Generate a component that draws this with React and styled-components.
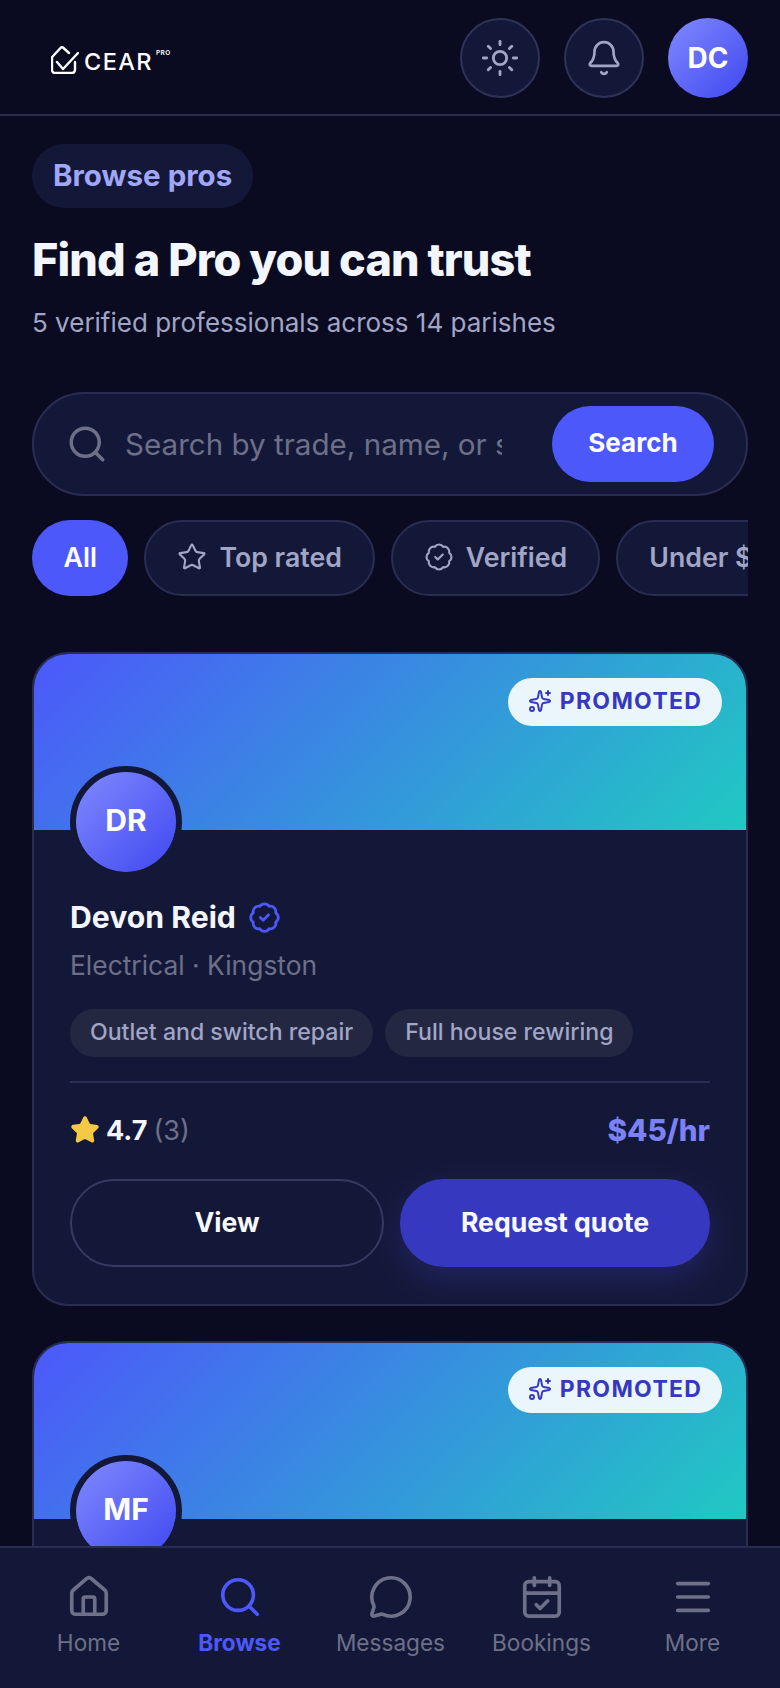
import React from "react";
import styled, { createGlobalStyle } from "styled-components";
import { Sun, Bell, Search, Star, BadgeCheck, Sparkles, House, MessageCircle, CalendarCheck, Menu } from "lucide-react";

const GlobalStyle = createGlobalStyle`
  html, body { margin: 0; padding: 0; background: #0a0b20; }
  * { box-sizing: border-box; }
  body { font-family: Inter, "Noto Sans", sans-serif; }
`;

const Page = styled.div`
  position: relative;
  width: 780px;
  height: 1688px;
  overflow: hidden;
  background: #0a0b20;
  color: #f4f6ff;
`;

const Header = styled.header`
  display: flex;
  align-items: center;
  justify-content: space-between;
  height: 116px;
  padding: 2px 32px 0 51px;
  border-bottom: 2px solid #2a2d52;
`;

const Logo = styled.div`
  display: flex;
  align-items: center;
  gap: 3px;
  padding-top: 3px;
  color: #fff;
`;

const LogoText = styled.span`
  margin: 3px 0 0 2px;
  font-size: 23.5px;
  font-weight: 500;
  letter-spacing: 1.4px;
`;

const LogoPro = styled.span`
  font-size: 6.5px;
  font-weight: 600;
  letter-spacing: 0.5px;
  align-self: flex-start;
  margin-top: 6px;
  line-height: 1;
`;

const HeaderActions = styled.div`
  display: flex;
  gap: 24px;
`;

const RoundButton = styled.button`
  width: 80px;
  height: 80px;
  border-radius: 50%;
  border: 2px solid #2f3358;
  background: #141838;
  color: #a1a5c6;
  display: flex;
  align-items: center;
  justify-content: center;
  padding: 0;
`;

const Avatar = styled.div`
  border-radius: 50%;
  background: linear-gradient(135deg, #8189ff, #3f48f0);
  color: #fff;
  display: flex;
  align-items: center;
  justify-content: center;
  font-weight: 700;
  width: ${(p) => p.$size}px;
  height: ${(p) => p.$size}px;
  font-size: ${(p) => p.$font}px;
`;

const CardAvatar = styled(Avatar)`
  border: 6px solid #141838;
  background-clip: padding-box;
  margin: -64px 0 0 0;
  padding-bottom: 4px;
  position: relative;
`;

const Main = styled.main`
  padding: 28px 32px 0;
`;

const Eyebrow = styled.div`
  display: inline-flex;
  align-items: center;
  height: 64px;
  padding: 0 21px 2px;
  border-radius: 32px;
  background: #141838;
  color: #a0a6f8;
  font-size: 29.5px;
  font-weight: 700;
`;

const Title = styled.h1`
  margin: 24px 0 0;
  font-size: 45px;
  line-height: 56px;
  font-weight: 800;
  letter-spacing: -0.9px;
`;

const Subtitle = styled.p`
  margin: 18px 0 0;
  font-size: 26px;
  line-height: 34px;
  color: #a1a5c6;
`;

const SearchBar = styled.form`
  display: flex;
  align-items: center;
  height: 104px;
  margin-top: 52px;
  padding: 0 32px;
  border-radius: 52px;
  border: 2px solid #2a2d52;
  background: #141838;
  color: #6d7088;
`;

const SearchInput = styled.input`
  flex: none;
  width: 377px;
  margin: 0 50px 0 17px;
  padding: 0;
  border: 0;
  outline: 0;
  background: transparent;
  font: 400 29.6px Inter, sans-serif;
  &::placeholder { color: #6d7088; opacity: 1; }
`;

const SearchButton = styled.button`
  flex: none;
  width: 162px;
  height: 76px;
  border: 0;
  border-radius: 38px;
  background: #4c58fa;
  color: #fff;
  font: 700 26px Inter, sans-serif;
  padding: 0 0 3px;
`;

const Filters = styled.div`
  display: flex;
  gap: 16px;
  margin-top: 24px;
  overflow: hidden;
`;

const Chip = styled.div`
  flex: none;
  display: flex;
  align-items: center;
  gap: 12px;
  height: 76px;
  padding: 0 ${(p) => (p.$active ? 31.5 : 31)}px 2px;
  border-radius: 38px;
  border: ${(p) => (p.$active ? "0" : "2px solid #2a2d52")};
  background: ${(p) => (p.$active ? "#4c58fa" : "#141838")};
  color: ${(p) => (p.$active ? "#fff" : "#a1a5c6")};
  font-size: 26.7px;
  font-weight: 600;
`;

const Card = styled.article`
  margin-top: ${(p) => p.$gap}px;
  border-radius: 36px;
  border: 2px solid #2a2d52;
  background: #141838;
  overflow: hidden;
`;

const Banner = styled.div`
  display: flex;
  justify-content: flex-end;
  align-items: flex-start;
  height: 176px;
  padding: 24px 24px 0 0;
  background: linear-gradient(135deg, #4c58fa, #20c9c2);
`;

const PromotedBadge = styled.div`
  display: flex;
  align-items: center;
  justify-content: center;
  gap: 8px;
  width: 214px;
  height: ${(p) => p.$height}px;
  padding-bottom: 2px;
  border-radius: 24px;
  background: #ebf6fb;
  color: #3639bf;
  font-size: 23px;
  font-weight: 700;
  letter-spacing: 1.3px;
`;

const CardBody = styled.div`
  padding: 0 36px 37px;
`;

const NameRow = styled.div`
  display: flex;
  align-items: center;
  gap: 12px;
  margin-top: 16px;
  height: 46px;
  font-size: 30.2px;
  font-weight: 700;
  color: #4c58fa;
`;

const Name = styled.span`
  color: #f4f6ff;
`;

const Meta = styled.div`
  margin-top: 5px;
  font-size: 26.4px;
  line-height: 40px;
  color: #6d7088;
`;

const Tags = styled.div`
  display: flex;
  gap: 12px;
  margin-top: 24px;
`;

const Tag = styled.span`
  display: flex;
  align-items: center;
  height: 48px;
  padding: 0 20px 2px;
  border-radius: 24px;
  background: #232742;
  color: #a1a5c6;
  font-size: 23.1px;
  font-weight: 500;
`;

const Divider = styled.hr`
  margin: 24px 0 0;
  border: 0;
  border-top: 2px solid #2a2d52;
`;

const StatsRow = styled.div`
  display: flex;
  align-items: center;
  justify-content: space-between;
  margin-top: 24px;
  height: 46px;
`;

const Rating = styled.div`
  display: flex;
  align-items: center;
  gap: 6px;
  font-size: 27px;
  font-weight: 700;
`;

const Reviews = styled.span`
  font-weight: 400;
  color: #6d7088;
`;

const Price = styled.div`
  font-size: 29.7px;
  font-weight: 800;
  color: #7a82f5;
`;

const Actions = styled.div`
  display: grid;
  grid-template-columns: 314px 310px;
  gap: 16px;
  margin-top: 26px;
`;

const ActionButton = styled.button`
  height: 88px;
  border-radius: 44px;
  border: 2px solid ${(p) => (p.$primary ? "#3639bf" : "#363a60")};
  background: ${(p) => (p.$primary ? "#3639bf" : "transparent")};
  box-shadow: ${(p) => (p.$primary ? "0 12px 36px rgba(76, 88, 250, 0.22)" : "none")};
  color: #f8f9ff;
  font: 700 26.6px Inter, sans-serif;
  padding: 0 0 2px;
`;

const BottomNav = styled.nav`
  position: absolute;
  left: 0;
  right: 0;
  bottom: 0;
  height: 142px;
  display: grid;
  grid-template-columns: repeat(5, 151px);
  padding: 26px 12px 0 13px;
  border-top: 2px solid #2a2d52;
  background: #141838;
`;

const NavItem = styled.div`
  display: flex;
  flex-direction: column;
  align-items: center;
  gap: 8px;
  color: ${(p) => (p.$active ? "#4c58fa" : "#6d7088")};
  font-size: 22.6px;
  font-weight: ${(p) => (p.$active ? 700 : 400)};
  line-height: 30px;
`;

const LogoMark = () => (
  <svg width="28" height="28" viewBox="0 0 28 28" fill="none" stroke="#fff" strokeWidth="2.4" strokeLinecap="round" strokeLinejoin="round">
    <path d="M24 16v8a3 3 0 0 1-3 3H4a3 3 0 0 1-3-3V12a2 2 0 0 1 .6-1.5L9.5 2a2 2 0 0 1 3 0L18 7" />
    <path d="M6 16l6 7L27 7" />
  </svg>
);

const ProCard = ({ initials, gap, badgeHeight, children }) => (
  <Card $gap={gap}>
    <Banner>
      <PromotedBadge $height={badgeHeight}>
        <Sparkles size={24} strokeWidth={2} />
        PROMOTED
      </PromotedBadge>
    </Banner>
    <CardBody>
      <CardAvatar $size={112} $font={30}>{initials}</CardAvatar>
      {children}
    </CardBody>
  </Card>
);

const navItems = [
  { label: "Home", Icon: House },
  { label: "Browse", Icon: Search, active: true },
  { label: "Messages", Icon: MessageCircle },
  { label: "Bookings", Icon: CalendarCheck },
  { label: "More", Icon: Menu },
];

export default function App() {
  return (
    <Page>
      <GlobalStyle />
      <Header>
        <Logo>
          <LogoMark />
          <LogoText>CEAR</LogoText>
          <LogoPro>PRO</LogoPro>
        </Logo>
        <HeaderActions>
          <RoundButton><Sun size={40} strokeWidth={1.7} /></RoundButton>
          <RoundButton><Bell size={38} strokeWidth={1.7} /></RoundButton>
          <Avatar $size={80} $font={28}>DC</Avatar>
        </HeaderActions>
      </Header>
      <Main>
        <Eyebrow>Browse pros</Eyebrow>
        <Title>Find a Pro you can trust</Title>
        <Subtitle>5 verified professionals across 14 parishes</Subtitle>
        <SearchBar>
          <Search size={42} strokeWidth={2} />
          <SearchInput placeholder="Search by trade, name, or service" />
          <SearchButton type="button">Search</SearchButton>
        </SearchBar>
        <Filters>
          <Chip $active>All</Chip>
          <Chip><Star size={30} strokeWidth={1.7} />Top rated</Chip>
          <Chip><BadgeCheck size={30} strokeWidth={1.7} />Verified</Chip>
          <Chip>Under $50</Chip>
        </Filters>
        <ProCard gap={56} badgeHeight={48} initials="DR">
          <NameRow>
            <Name>Devon Reid</Name>
            <BadgeCheck size={33} strokeWidth={2} />
          </NameRow>
          <Meta>Electrical · Kingston</Meta>
          <Tags>
            <Tag>Outlet and switch repair</Tag>
            <Tag>Full house rewiring</Tag>
          </Tags>
          <Divider />
          <StatsRow>
            <Rating>
              <Star size={30} fill="#f5c945" color="#f5c945" />
              4.7 <Reviews>(3)</Reviews>
            </Rating>
            <Price>$45/hr</Price>
          </StatsRow>
          <Actions>
            <ActionButton>View</ActionButton>
            <ActionButton $primary>Request quote</ActionButton>
          </Actions>
        </ProCard>
        <ProCard gap={35} badgeHeight={46} initials="MF" />
      </Main>
      <BottomNav>
        {navItems.map(({ label, Icon, active }) => (
          <NavItem key={label} $active={active}>
            <Icon size={46} strokeWidth={1.9} />
            {label}
          </NavItem>
        ))}
      </BottomNav>
    </Page>
  );
}
